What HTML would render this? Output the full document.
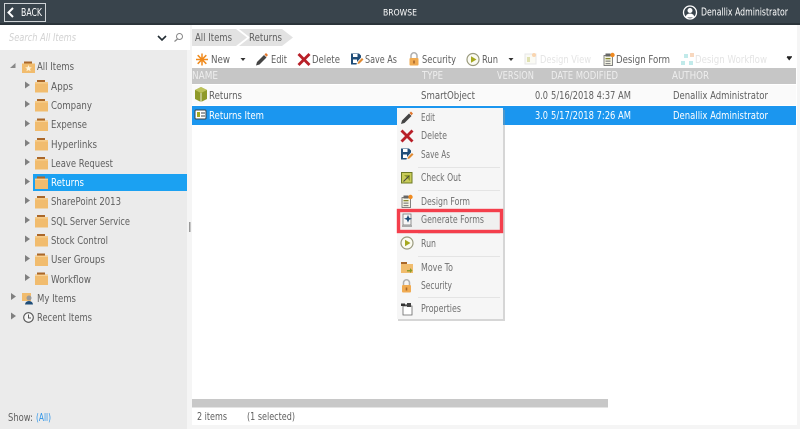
<!DOCTYPE html>
<html><head><meta charset="utf-8"><title>Browse</title>
<style>
html,body{margin:0;padding:0;background:#f5f5f5;width:800px;height:429px;overflow:hidden}
svg{display:block;filter:blur(.3px)}
text{font-family:"DejaVu Sans","Liberation Sans",sans-serif;font-size:10.2px;fill:#5f5f5f}
.w{fill:#fff}.h{fill:#eee}.l{fill:#d4d4d4}.m{fill:#707070}
</style></head><body>
<svg width="800" height="429" viewBox="0 0 800 429" xmlns="http://www.w3.org/2000/svg">
<defs>
<g id="folder"><rect x="2" y="0" width="8" height="3" fill="#a9672a"/><rect x="0" y="2" width="13" height="10.5" fill="#f1bc6e"/><rect x="0" y="2.4" width="13" height="1" fill="#f8d59c"/></g>
<path id="tri" d="M0 0L5 3.5L0 7Z" fill="#808080"/>
<g id="pencil"><path d="M1 13L2 9.5L9 2.500L11.500 5L4.500 12Z" fill="#444"/><path d="M9.500 2L11 .5L13 2.500L11.500 4.200Z" fill="#e2762c"/></g>
<path id="x" d="M.5 2L2.500 0L7 4.500L11.500 0L13.500 2L9 6.500L13.500 11L11.500 13L7 8.500L2.500 13L.5 11L5 6.500Z" fill="#b81f28"/>
<g id="save"><path d="M1 1H9L11 3V5L7 9.500L6.500 12H1Z" fill="#1f4d78"/><rect x="3" y="1.500" width="4.500" height="3" fill="#fff"/><rect x="3" y="7" width="4" height="3.500" fill="#fff"/><path d="M7.500 11.500L8 9.500L12 5.500L13.500 7L9.500 11Z" fill="#e08a32"/></g>
<g id="lock"><path d="M3 6V3.800A3 3 0 0 1 9 3.800V6" fill="none" stroke="#b0b0b0" stroke-width="1.500"/><rect x="1.500" y="6" width="9" height="7.500" rx="1" fill="#f0ab52"/><rect x="5.200" y="8.500" width="1.600" height="3" fill="#a9672a"/></g>
<g id="run"><circle cx="7" cy="7" r="6" fill="#fbfbf2" stroke="#9a9a7e" stroke-width="1.200"/><path d="M5 3.800L10.500 7L5 10.200Z" fill="#a5a820"/></g>
<g id="df"><rect x="2" y="3.500" width="8.500" height="10" fill="#f4f4e4" stroke="#666" stroke-width=".8"/><rect x="3.500" y="1.500" width="5" height="3" fill="#666"/><rect x="3.500" y="6" width="5" height="1.300" fill="#8a8a30"/><rect x="3.500" y="8.500" width="5" height="1.300" fill="#888"/><rect x="3.500" y="11" width="5" height="1.200" fill="#888"/><circle cx="10.500" cy="3" r="2.200" fill="#f08a20"/></g>
</defs>

<!-- header -->
<rect width="800" height="24" fill="#39444c"/>
<rect y="23" width="800" height="2" fill="#2b343a"/>
<rect x="4.500" y="3.500" width="41" height="18" fill="none" stroke="#cfd3d6" stroke-width="1"/>
<path d="M13 8L8.500 12.500L13 17" fill="none" stroke="#fff" stroke-width="2"/>
<text class="w" x="21" y="16" textLength="21" lengthAdjust="spacingAndGlyphs">BACK</text>
<text class="w" x="383" y="15.500" textLength="34" lengthAdjust="spacingAndGlyphs" style="font-size:9px">BROWSE</text>
<circle cx="690" cy="12.500" r="6.500" fill="#39444c" stroke="#fff" stroke-width="1.300"/>
<circle cx="690" cy="10.500" r="2.500" fill="#fff"/><path d="M685.500 17.500A4.500 4 0 0 1 694.500 17.500Z" fill="#fff"/>
<text class="w" x="701" y="15.500" textLength="87" lengthAdjust="spacingAndGlyphs">Denallix Administrator</text>

<!-- left -->
<rect x="0" y="25" width="190" height="25" fill="#fff"/>
<rect x="0" y="50" width="187" height="379" fill="#ebebeb"/>
<text x="9" y="41" textLength="67" lengthAdjust="spacingAndGlyphs" style="fill:#d2d2d2;font-style:italic">Search All Items</text>
<path d="M158 36L162 40L166 36" fill="none" stroke="#222c33" stroke-width="1.600"/>
<circle cx="179.500" cy="36.500" r="3" fill="none" stroke="#888" stroke-width="1"/><path d="M177.500 39L174.500 41.500" stroke="#888" stroke-width="1.200"/>
<rect x="189" y="222" width="1.500" height="10" fill="#999"/>

<path d="M10 68L15.500 68L15.500 63Z" fill="#888"/>
<rect x="24" y="61.500" width="8" height="3" fill="#a9672a"/><rect x="22" y="63.500" width="13" height="9.500" fill="#f1bc6e"/><path d="M28.500 65l1 2.200 2.300.2-1.800 1.500.6 2.300-2.100-1.200-2.100 1.200.6-2.300-1.800-1.500 2.300-.2z" fill="#fff3d8"/>
<text x="37" y="70" textLength="37" lengthAdjust="spacingAndGlyphs">All Items</text>

<rect x="33" y="174" width="154" height="17" fill="#1ba1f2"/>
<use href="#tri" x="25" y="81.500"/><use href="#folder" x="35" y="80"/><text x="51" y="90" textLength="22" lengthAdjust="spacingAndGlyphs">Apps</text>
<use href="#tri" x="25" y="100.500"/><use href="#folder" x="35" y="99"/><text x="51" y="109" textLength="41" lengthAdjust="spacingAndGlyphs">Company</text>
<use href="#tri" x="25" y="120"/><use href="#folder" x="35" y="118.500"/><text x="51" y="128" textLength="36" lengthAdjust="spacingAndGlyphs">Expense</text>
<use href="#tri" x="25" y="139.500"/><use href="#folder" x="35" y="138"/><text x="51" y="148" textLength="46" lengthAdjust="spacingAndGlyphs">Hyperlinks</text>
<use href="#tri" x="25" y="158.500"/><use href="#folder" x="35" y="157"/><text x="51" y="167" textLength="62" lengthAdjust="spacingAndGlyphs">Leave Request</text>
<use href="#tri" x="25" y="178"/><use href="#folder" x="35" y="176.500"/><text class="w" x="51" y="186" textLength="33" lengthAdjust="spacingAndGlyphs">Returns</text>
<use href="#tri" x="25" y="197"/><use href="#folder" x="35" y="196"/><text x="51" y="205" textLength="70" lengthAdjust="spacingAndGlyphs">SharePoint 2013</text>
<use href="#tri" x="25" y="216.500"/><use href="#folder" x="35" y="215"/><text x="51" y="225" textLength="79" lengthAdjust="spacingAndGlyphs">SQL Server Service</text>
<use href="#tri" x="25" y="235.500"/><use href="#folder" x="35" y="234"/><text x="51" y="244" textLength="57" lengthAdjust="spacingAndGlyphs">Stock Control</text>
<use href="#tri" x="25" y="255"/><use href="#folder" x="35" y="253.500"/><text x="51" y="263" textLength="54" lengthAdjust="spacingAndGlyphs">User Groups</text>
<use href="#tri" x="25" y="274"/><use href="#folder" x="35" y="272.500"/><text x="51" y="283" textLength="40" lengthAdjust="spacingAndGlyphs">Workflow</text>
<use href="#tri" x="11" y="293"/><rect x="22" y="293" width="9" height="8" fill="#f1bc6e"/><circle cx="29" cy="298" r="2.500" fill="#999"/><path d="M25 304.500A4 3.500 0 0 1 33 304.500Z" fill="#1f4d78"/><text x="37" y="302" textLength="39" lengthAdjust="spacingAndGlyphs">My Items</text>
<use href="#tri" x="11" y="312.500"/><circle cx="28.500" cy="317.500" r="4.800" fill="#f5f5f5" stroke="#555" stroke-width="1.100"/><path d="M28.500 314.500V318H31" fill="none" stroke="#555"/><text x="37" y="321" textLength="55" lengthAdjust="spacingAndGlyphs">Recent Items</text>
<text x="8" y="421" textLength="25" lengthAdjust="spacingAndGlyphs">Show:</text>
<text x="36" y="421" textLength="15" lengthAdjust="spacingAndGlyphs" style="fill:#2f95e8">(All)</text>

<!-- main -->
<rect x="192" y="25" width="605" height="400" fill="#fff"/>
<path d="M192 29H282L293 37.500L282 46H192Z" fill="#e2e2e2"/>
<path d="M236 29L247 37.500L236 46H239L250 37.500L239 29Z" fill="#fff"/>
<text x="195" y="41" textLength="37" lengthAdjust="spacingAndGlyphs">All Items</text>
<text x="249" y="41" textLength="33" lengthAdjust="spacingAndGlyphs">Returns</text>

<!-- toolbar -->
<g stroke="#f08a1d" stroke-width="1.500"><path d="M196 59.500H208M202 53.500V65.500M197.700 55.200L206.300 63.800M206.300 55.200L197.700 63.800"/></g>
<text x="211" y="63" textLength="19" lengthAdjust="spacingAndGlyphs">New</text>
<path d="M240.500 58H245.500L243 61Z" fill="#333"/>
<use href="#pencil" x="255" y="52.500"/><text x="271" y="63" textLength="16" lengthAdjust="spacingAndGlyphs">Edit</text>
<use href="#x" x="297" y="53"/><text x="312" y="63" textLength="28" lengthAdjust="spacingAndGlyphs">Delete</text>
<use href="#save" x="350" y="52.500"/><text x="365" y="63" textLength="32" lengthAdjust="spacingAndGlyphs">Save As</text>
<use href="#lock" x="408" y="52"/><text x="422" y="63" textLength="34" lengthAdjust="spacingAndGlyphs">Security</text>
<use href="#run" x="466" y="52.500"/><text x="482" y="63" textLength="16" lengthAdjust="spacingAndGlyphs">Run</text>
<path d="M508.500 58H513.500L511 61Z" fill="#333"/>
<g opacity=".35"><rect x="525" y="54" width="11" height="10" fill="#f3f3e0" stroke="#bbb"/><rect x="527" y="57" width="3" height="5" fill="#a5a820"/><circle cx="534" cy="55" r="2" fill="#f08a20"/></g>
<text class="l" x="540" y="63" textLength="51" lengthAdjust="spacingAndGlyphs" style="fill:#e4e4e4">Design View</text>
<use href="#df" x="602" y="52"/><text x="616" y="63" textLength="54" lengthAdjust="spacingAndGlyphs">Design Form</text>
<g opacity=".4"><rect x="684" y="54" width="4" height="4" fill="#6cc"/><rect x="690" y="53" width="4" height="4" fill="#f0a060"/><rect x="681" y="61" width="4" height="4" fill="#6cc"/><rect x="689" y="61" width="4" height="4" fill="#6cc"/></g>
<text class="l" x="695" y="63" textLength="72" lengthAdjust="spacingAndGlyphs" style="fill:#e4e4e4">Design Workflow</text>
<rect x="787" y="56" width="5" height="1" fill="#555"/><path d="M786.500 57H792L789.200 60.500Z" fill="#222"/>

<!-- table -->
<rect x="192" y="68" width="604" height="16" fill="#c6c6c6"/>
<g>
<text class="h" x="192" y="79" textLength="26" lengthAdjust="spacingAndGlyphs">NAME</text>
<text class="h" x="422" y="79" textLength="21" lengthAdjust="spacingAndGlyphs">TYPE</text>
<text class="h" x="497" y="79" textLength="37" lengthAdjust="spacingAndGlyphs">VERSION</text>
<text class="h" x="551" y="79" textLength="67" lengthAdjust="spacingAndGlyphs">DATE MODIFIED</text>
<text class="h" x="672" y="79" textLength="37" lengthAdjust="spacingAndGlyphs">AUTHOR</text>
</g>
<rect x="192" y="85" width="604" height="20" fill="#fafafa"/>
<rect x="192" y="106" width="604" height="19" fill="#1b96ef"/>
<path d="M195 90L201 87L207 90V99L201 102L195 99Z" fill="#8f9a2a"/><path d="M195 90L201 87L207 90L201 93Z" fill="#bcc25a"/><path d="M201 93V102" stroke="#fff" stroke-width=".8"/>
<text x="209" y="99" textLength="33" lengthAdjust="spacingAndGlyphs">Returns</text>
<text x="421" y="99" textLength="54" lengthAdjust="spacingAndGlyphs">SmartObject</text>
<text x="535" y="99" textLength="13" lengthAdjust="spacingAndGlyphs">0.0</text>
<text x="551" y="99" textLength="80" lengthAdjust="spacingAndGlyphs">5/16/2018 4:37 AM</text>
<text x="673" y="99" textLength="95" lengthAdjust="spacingAndGlyphs">Denallix Administrator</text>
<rect x="195" y="110" width="11" height="9" rx="1" fill="#fff" stroke="#37424a"/><rect x="197" y="112" width="3" height="5" fill="#a5a820"/><rect x="201" y="112.500" width="4" height="1" fill="#37424a"/><rect x="201" y="115.500" width="4" height="1" fill="#37424a"/>
<text class="w" x="209" y="119" textLength="55" lengthAdjust="spacingAndGlyphs">Returns Item</text>
<text class="w" x="535" y="119" textLength="13" lengthAdjust="spacingAndGlyphs">3.0</text>
<text class="w" x="551" y="119" textLength="80" lengthAdjust="spacingAndGlyphs">5/17/2018 7:26 AM</text>
<text class="w" x="673" y="119" textLength="95" lengthAdjust="spacingAndGlyphs">Denallix Administrator</text>

<!-- status -->
<rect x="192" y="399" width="416" height="8.500" fill="#c8c8c8"/>
<text x="197" y="420" textLength="30" lengthAdjust="spacingAndGlyphs">2 items</text>
<text x="247" y="420" textLength="48" lengthAdjust="spacingAndGlyphs">(1 selected)</text>

<!-- context menu -->
<rect x="398" y="110" width="107" height="211" fill="#999" opacity=".4"/>
<rect x="397" y="108" width="106" height="211" fill="#f6f6f6"/>
<g fill="#e4e4e4"><rect x="418" y="167" width="82" height="1"/><rect x="418" y="190" width="82" height="1"/><rect x="418" y="233" width="82" height="1"/><rect x="418" y="256" width="82" height="1"/><rect x="418" y="297" width="82" height="1"/></g>
<use href="#pencil" x="400" y="111"/><text class="m" x="421" y="121" textLength="14" lengthAdjust="spacingAndGlyphs">Edit</text>
<use href="#x" x="400" y="129.500"/><text class="m" x="421" y="139" textLength="26" lengthAdjust="spacingAndGlyphs">Delete</text>
<use href="#save" x="400" y="147.500"/><text class="m" x="421" y="158" textLength="29" lengthAdjust="spacingAndGlyphs">Save As</text>
<rect x="401.500" y="172.500" width="10.500" height="10.500" fill="#c9cc5a" stroke="#6d7a24"/><path d="M404 175H410V181Z" fill="#8f9a2a"/><path d="M403.500 181.500L409 176" stroke="#444"/><text class="m" x="421" y="181" textLength="40" lengthAdjust="spacingAndGlyphs">Check Out</text>
<use href="#df" x="400" y="194"/><text class="m" x="421" y="205" textLength="49" lengthAdjust="spacingAndGlyphs">Design Form</text>
<rect x="398.500" y="210.500" width="103" height="21" fill="#f0f0f0" stroke="#f43f4c" stroke-width="3.400"/>
<rect x="403" y="214" width="8" height="11" fill="#f8f8f8" stroke="#777" stroke-width=".8"/><path d="M408 215l1.200 2.800 2.800 1-2.800 1-1.200 2.800-1.200-2.800-2.800-1 2.800-1z" fill="#1f4d78"/><path d="M402 225h10v2h-10z" fill="#aaa"/>
<text class="m" x="421" y="223" textLength="63" lengthAdjust="spacingAndGlyphs">Generate Forms</text>
<use href="#run" x="400" y="236"/><text class="m" x="421" y="247" textLength="15" lengthAdjust="spacingAndGlyphs">Run</text>
<rect x="401" y="262" width="6" height="2.500" fill="#a9672a"/><rect x="401" y="264" width="12" height="9" fill="#f1bc6e"/><path d="M407 270H410V268L412.500 270.500L410 273V271.500H407Z" fill="#8f9a2a"/><text class="m" x="421" y="271" textLength="32" lengthAdjust="spacingAndGlyphs">Move To</text>
<use href="#lock" x="400.500" y="279"/><text class="m" x="421" y="289" textLength="31" lengthAdjust="spacingAndGlyphs">Security</text>
<path d="M403 306H412V315H403Z" fill="#fff" stroke="#666" stroke-width=".8"/><rect x="401" y="303.500" width="4" height="2.500" fill="#333"/><rect x="405" y="304.500" width="6" height="1.200" fill="#333"/><rect x="407" y="303" width="4" height="4" fill="#444"/><text class="m" x="421" y="312" textLength="40" lengthAdjust="spacingAndGlyphs">Properties</text>
</svg>
</body></html>
